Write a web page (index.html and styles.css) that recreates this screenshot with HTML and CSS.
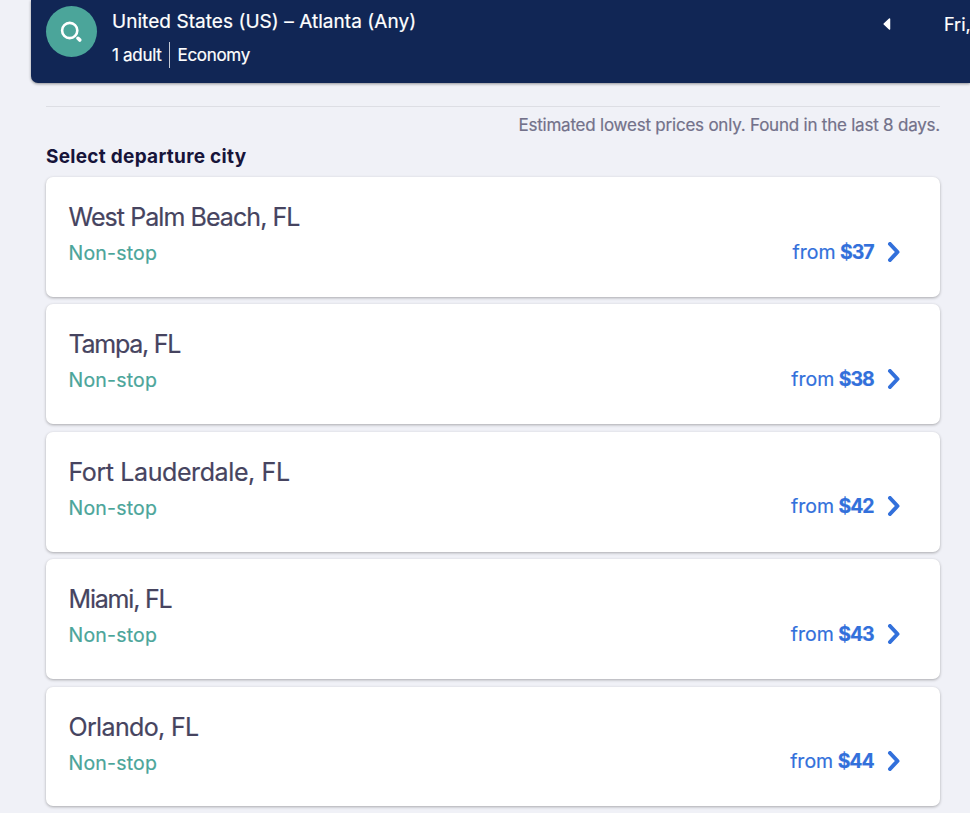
FILE: index.html
```html
<!DOCTYPE html>
<html lang="en">
<head>
<meta charset="utf-8">
<title>Select departure city</title>
<link rel="stylesheet" href="styles.css">
</head>
<body>
<header class="search-bar">
  <div class="search-button">
    <svg width="51" height="51" viewBox="0 0 51 51" fill="none" stroke="#fff"><circle cx="23.7" cy="24.5" r="7.6" stroke-width="2.6"/><path d="M32 32.3l1.8 1.8" stroke-width="3.6" stroke-linecap="round"/></svg>
  </div>
  <div class="summary">
    <div class="route"><span>United States (US) – Atlanta (Any)</span></div>
    <div class="details"><span class="adults">1 adult</span><span class="cabin">Economy</span></div>
  </div>
  <svg class="previous" width="8" height="12" viewBox="0 0 8 12"><path d="M6.5 1L1.2 6l5.3 5z" fill="#fff" stroke="#fff" stroke-width="1.5" stroke-linejoin="round"/></svg>
  <span class="date">Fri,</span>
</header>
<main class="results">
  <p class="notice"><span>Estimated lowest prices only. Found in the last 8 days.</span></p>
  <h1 class="heading"><span>Select departure city</span></h1>
  <div class="cards">
    <article class="card"><div><h2 class="city west-palm-beach">West Palm Beach, FL</h2><p class="stops">Non-stop</p></div><div class="price"><span class="from">from</span><b>$37</b><svg width="14" height="20" viewBox="0 0 14 20"><path d="M3 2l7.5 8L3 18"/></svg></div></article>
    <article class="card"><div><h2 class="city tampa">Tampa, FL</h2><p class="stops">Non-stop</p></div><div class="price"><span class="from">from</span><b>$38</b><svg width="14" height="20" viewBox="0 0 14 20"><path d="M3 2l7.5 8L3 18"/></svg></div></article>
    <article class="card"><div><h2 class="city fort-lauderdale">Fort Lauderdale, FL</h2><p class="stops">Non-stop</p></div><div class="price"><span class="from">from</span><b>$42</b><svg width="14" height="20" viewBox="0 0 14 20"><path d="M3 2l7.5 8L3 18"/></svg></div></article>
    <article class="card"><div><h2 class="city miami">Miami, FL</h2><p class="stops">Non-stop</p></div><div class="price"><span class="from">from</span><b>$43</b><svg width="14" height="20" viewBox="0 0 14 20"><path d="M3 2l7.5 8L3 18"/></svg></div></article>
    <article class="card"><div><h2 class="city orlando">Orlando, FL</h2><p class="stops">Non-stop</p></div><div class="price"><span class="from">from</span><b>$44</b><svg width="14" height="20" viewBox="0 0 14 20"><path d="M3 2l7.5 8L3 18"/></svg></div></article>
  </div>
</main>
</body>
</html>
```
FILE: styles.css
```css
* { box-sizing: border-box; }
html, body { height: 813px; overflow: hidden; }
body { margin: 0; background: #f0f1f7; font-family: Inter, "Liberation Sans", sans-serif; -webkit-text-stroke: .2px; }
h1, h2, p { margin: 0; }
.search-bar { display: flex; height: 83px; margin-left: 30.5px; padding-left: 15.5px; background: #112655; color: #fff; border-radius: 0 0 0 7px; box-shadow: 0 1px 3px rgba(0,0,0,.4); white-space: nowrap; }
.search-button { width: 51px; height: 51px; margin-top: 6px; border-radius: 50%; background: #4ba59a; flex: none; }
.search-button svg { display: block; }
.summary { width: 320px; margin: 10px 0 0 15px; flex: none; }
.route { font-size: 19px; line-height: 24px; letter-spacing: .05px; }
.details { display: flex; margin-top: 8px; font-size: 17px; line-height: 26px; }
.adults { width: 58px; border-right: 1px solid #c4c9d5; letter-spacing: -.3px; }
.cabin { margin-left: 7.5px; letter-spacing: -.3px; }
.previous { margin: 18px 0 0 451px; flex: none; }
.date { margin: 13px 0 0 53px; font-size: 18px; line-height: 24px; flex: none; }
.results { width: 894px; margin: 23px 0 0 46px; border-top: 1px solid #dddee4; }
.notice { height: 37px; padding-top: 6px; color: #73718a; font-size: 17px; line-height: 24px; text-align: right; letter-spacing: -.22px; white-space: nowrap; }
.heading { height: 33px; color: #17143a; font-size: 19px; font-weight: 700; line-height: 26px; letter-spacing: .28px; -webkit-text-stroke: 0; }
.cards { display: flex; flex-direction: column; gap: 7.5px; }
.card { display: flex; justify-content: space-between; width: 893.5px; height: 119.9px; flex: none; padding: 24px 39px 0 22.5px; background: #fff; border-radius: 7px; box-shadow: 0 1px 3px rgba(0,0,0,.3); white-space: nowrap; }
.city { color: #46445f; font-size: 25px; font-weight: 400; line-height: 32px; letter-spacing: -.4px; }
.west-palm-beach { letter-spacing: -.93px; }
.tampa { letter-spacing: -1.25px; }
.miami { letter-spacing: -1.2px; }
.orlando { letter-spacing: -.65px; }
.stops { margin-top: 6px; color: #4ba59a; font-size: 19.5px; line-height: 28px; letter-spacing: .2px; }
.price { display: flex; align-items: center; height: 28px; margin-top: 36.5px; color: #3270db; font-size: 19.5px; }
.price b { margin-left: 4.5px; font-weight: 700; letter-spacing: -1.1px; }
.price svg { margin-left: 13px; fill: none; stroke: #3270db; stroke-width: 4; stroke-linecap: round; stroke-linejoin: round; }
```
